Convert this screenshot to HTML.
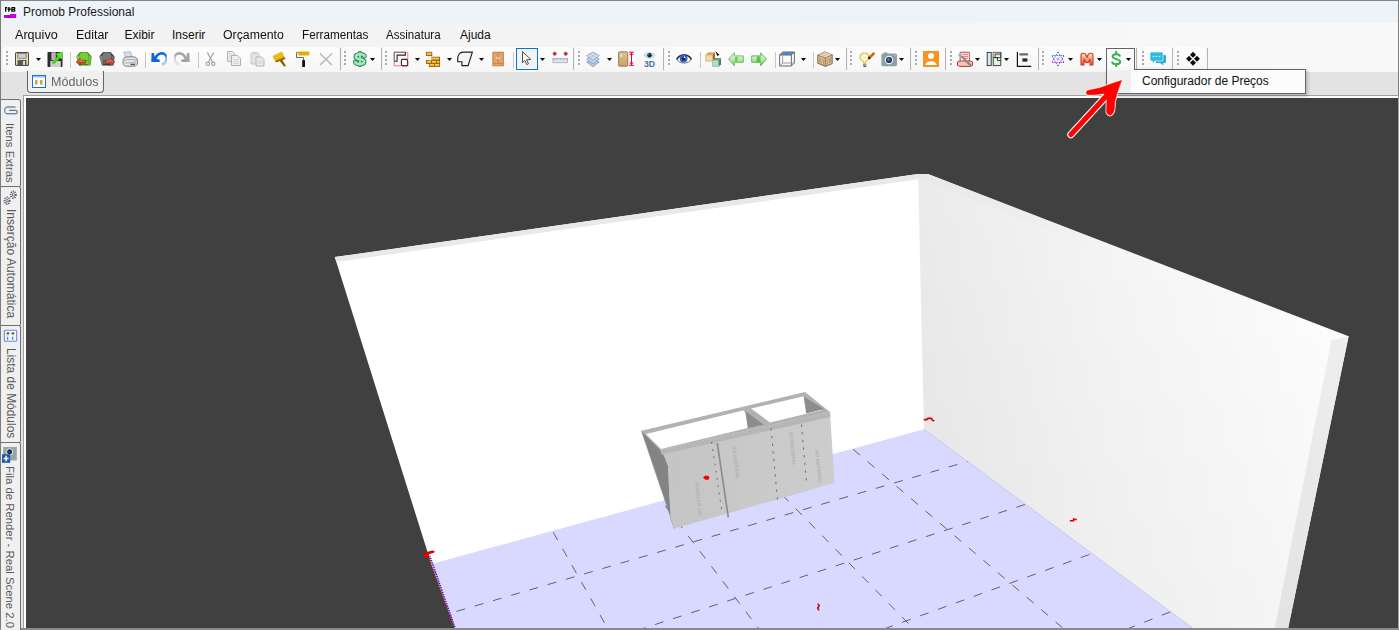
<!DOCTYPE html>
<html><head><meta charset="utf-8">
<style>
*{margin:0;padding:0;box-sizing:border-box}
html,body{width:1399px;height:630px;overflow:hidden;background:#f0f0f0;font-family:"Liberation Sans",sans-serif;font-size:12px;color:#000}
.a{position:absolute}
#title{left:0;top:0;width:1399px;height:23px;background:#eef2f9;border-top:1px solid #858585}
#menubar{left:0;top:23px;width:1399px;height:24px;background:linear-gradient(to right,#f1f1f1,#f9f9f9)}
#menubar span{position:absolute;top:5px;font-size:12px;color:#101010;transform-origin:0 0}
#tbrow{left:0;top:47px;width:1399px;height:25px;background:linear-gradient(to right,#f1f1f1,#f9f9f9)}
#tabrow{left:0;top:72px;width:1399px;height:25px;background:#e3e3e3}
.seg{position:absolute;top:47px;height:25px;background:linear-gradient(#fdfdfd,#f6f6f6);border-radius:4px 4px 0 0}
.grip{position:absolute;top:51px;width:2px;height:14px;background:repeating-linear-gradient(#a8a8a8 0 2px,transparent 2px 4px)}
.sep{position:absolute;top:52px;width:1px;height:16px;background:#c8c8c8}
.dd{position:absolute;top:58px;width:0;height:0;border-left:3px solid transparent;border-right:3px solid transparent;border-top:3px solid #000}
.ic{position:absolute;top:51px;width:16px;height:16px}
#lborder{left:0;top:0;width:1px;height:630px;background:#7d7d7d}
#rborder{left:1398px;top:0;width:1px;height:630px;background:#7d7d7d}
#bborder{left:0;top:628px;width:1399px;height:2px;background:#8a8a8a}
#vp{left:23px;top:95px;width:1376px;height:535px;border:1px solid #a0a0a0;background:#fff}
#dark{left:26px;top:98px;width:1372px;height:530px;background:#404040;overflow:hidden}
.vtab{position:absolute;left:1px;width:20px;background:#f0f0f0;border:1px solid #707070;border-left:none;border-radius:0 2.5px 2.5px 0}
.vt{position:absolute;left:3.8px;writing-mode:vertical-rl;font-size:11.6px;color:#5a5a5a;white-space:nowrap}
</style></head><body>
<div id="title" class="a">
  <svg class="a" style="left:0px;top:0px" width="20" height="20" viewBox="0 0 20 20"><rect x="4" y="4.5" width="12.2" height="12.5" fill="#fff"/>
<path d="M5,6 L7.3,6 L7.3,7.2 L6.3,7.2 L6.3,10.8 L5,10.8 Z" fill="#000"/>
<path d="M8.2,6 L9.6,6 L9.6,7.6 L10.8,7.6 L10.8,8.8 L9.6,8.8 L9.6,10.8 L8.2,10.8 L8.2,8.8 L7.4,8.8 L7.4,7.6 L8.2,7.6 Z" fill="#000"/>
<path d="M11.2,6 L14.6,6 Q15.4,6 15.4,7 L15.4,7.8 L14.8,8.4 L15.4,9 L15.4,10 Q15.4,10.8 14.6,10.8 L11.2,10.8 Z M12.5,7.2 L12.5,7.9 L13.9,7.9 L13.9,7.2 Z M12.5,9 L12.5,9.7 L13.9,9.7 L13.9,9 Z" fill="#000" fill-rule="evenodd"/>
<rect x="4" y="14" width="12.2" height="3" fill="#c000e0"/><rect x="10" y="13" width="6.2" height="1.2" fill="#c000e0"/><rect x="7.8" y="15.4" width="1.6" height="1" fill="#40106a"/></svg>
  <span class="a" style="left:23px;top:4px;font-size:12px;color:#1a1a1a">Promob Professional</span>
</div>
<div id="menubar" class="a">
  <span style="left:15px;transform:scaleX(1.05)">Arquivo</span>
  <span style="left:75.5px;transform:scaleX(1.035)">Editar</span>
  <span style="left:124.5px">Exibir</span>
  <span style="left:172px">Inserir</span>
  <span style="left:222.5px;transform:scaleX(1.025)">Orçamento</span>
  <span style="left:302px;transform:scaleX(0.977)">Ferramentas</span>
  <span style="left:386px;transform:scaleX(0.963)">Assinatura</span>
  <span style="left:460px">Ajuda</span>
</div>
<div id="tbrow" class="a"></div>
<div id="tabrow" class="a"></div>
<!--TB-->
<div class="seg" style="left:3px;width:336px"></div>
<div class="a" style="left:339.5px;top:48px;width:1px;height:22px;background:#b4b4b4"></div>
<div class="seg" style="left:341.5px;width:39.0px"></div>
<div class="a" style="left:381.0px;top:48px;width:1px;height:22px;background:#b4b4b4"></div>
<div class="seg" style="left:383px;width:189.5px"></div>
<div class="a" style="left:573.0px;top:48px;width:1px;height:22px;background:#b4b4b4"></div>
<div class="seg" style="left:575px;width:87.5px"></div>
<div class="a" style="left:663.0px;top:48px;width:1px;height:22px;background:#b4b4b4"></div>
<div class="seg" style="left:665px;width:180.5px"></div>
<div class="a" style="left:846.0px;top:48px;width:1px;height:22px;background:#b4b4b4"></div>
<div class="seg" style="left:848px;width:61.5px"></div>
<div class="a" style="left:910.0px;top:48px;width:1px;height:22px;background:#b4b4b4"></div>
<div class="seg" style="left:912px;width:32.5px"></div>
<div class="a" style="left:945.0px;top:48px;width:1px;height:22px;background:#b4b4b4"></div>
<div class="seg" style="left:947px;width:90.5px"></div>
<div class="a" style="left:1038.0px;top:48px;width:1px;height:22px;background:#b4b4b4"></div>
<div class="seg" style="left:1040px;width:95px"></div>
<div class="a" style="left:1135.5px;top:48px;width:1px;height:22px;background:#b4b4b4"></div>
<div class="seg" style="left:1137.5px;width:34.0px"></div>
<div class="a" style="left:1172.0px;top:48px;width:1px;height:22px;background:#b4b4b4"></div>
<div class="seg" style="left:1174px;width:32px"></div>
<div class="a" style="left:1206.5px;top:48px;width:1px;height:22px;background:#b4b4b4"></div>
<div class="grip" style="left:6px"></div>
<div class="grip" style="left:344px"></div>
<div class="grip" style="left:385px"></div>
<div class="grip" style="left:577.5px"></div>
<div class="grip" style="left:667.5px"></div>
<div class="grip" style="left:850px"></div>
<div class="grip" style="left:914.5px"></div>
<div class="grip" style="left:949.5px"></div>
<div class="grip" style="left:1042px"></div>
<div class="grip" style="left:1141.5px"></div>
<div class="grip" style="left:1176.5px"></div>
<div class="sep" style="left:70px"></div>
<div class="sep" style="left:145px"></div>
<div class="sep" style="left:197.5px"></div>
<div class="sep" style="left:513px"></div>
<div class="sep" style="left:699.5px"></div>
<div class="sep" style="left:774.5px"></div>
<div class="sep" style="left:812.5px"></div>
<div class="a" style="left:516px;top:48px;width:22px;height:22px;border:1px solid #0078d7;background:#f3f3f3"></div>
<div class="a" style="left:1106px;top:48px;width:29px;height:23px;border:1px solid #646464;border-bottom:none;background:#fbfbfb"></div>
<svg class="a" style="left:35.5px;top:58px" width="6" height="4" viewBox="0 0 6 4"><path d="M0,0 L5,0 L2.5,3 Z" fill="#000"/></svg>
<svg class="a" style="left:370px;top:58px" width="6" height="4" viewBox="0 0 6 4"><path d="M0,0 L5,0 L2.5,3 Z" fill="#000"/></svg>
<svg class="a" style="left:414.5px;top:58px" width="6" height="4" viewBox="0 0 6 4"><path d="M0,0 L5,0 L2.5,3 Z" fill="#000"/></svg>
<svg class="a" style="left:447px;top:58px" width="6" height="4" viewBox="0 0 6 4"><path d="M0,0 L5,0 L2.5,3 Z" fill="#000"/></svg>
<svg class="a" style="left:478.5px;top:58px" width="6" height="4" viewBox="0 0 6 4"><path d="M0,0 L5,0 L2.5,3 Z" fill="#000"/></svg>
<svg class="a" style="left:540px;top:58px" width="6" height="4" viewBox="0 0 6 4"><path d="M0,0 L5,0 L2.5,3 Z" fill="#000"/></svg>
<svg class="a" style="left:607px;top:58px" width="6" height="4" viewBox="0 0 6 4"><path d="M0,0 L5,0 L2.5,3 Z" fill="#000"/></svg>
<svg class="a" style="left:801px;top:58px" width="6" height="4" viewBox="0 0 6 4"><path d="M0,0 L5,0 L2.5,3 Z" fill="#000"/></svg>
<svg class="a" style="left:835px;top:58px" width="6" height="4" viewBox="0 0 6 4"><path d="M0,0 L5,0 L2.5,3 Z" fill="#000"/></svg>
<svg class="a" style="left:899px;top:58px" width="6" height="4" viewBox="0 0 6 4"><path d="M0,0 L5,0 L2.5,3 Z" fill="#000"/></svg>
<svg class="a" style="left:975px;top:58px" width="6" height="4" viewBox="0 0 6 4"><path d="M0,0 L5,0 L2.5,3 Z" fill="#000"/></svg>
<svg class="a" style="left:1004px;top:58px" width="6" height="4" viewBox="0 0 6 4"><path d="M0,0 L5,0 L2.5,3 Z" fill="#000"/></svg>
<svg class="a" style="left:1068px;top:58px" width="6" height="4" viewBox="0 0 6 4"><path d="M0,0 L5,0 L2.5,3 Z" fill="#000"/></svg>
<svg class="a" style="left:1097px;top:58px" width="6" height="4" viewBox="0 0 6 4"><path d="M0,0 L5,0 L2.5,3 Z" fill="#000"/></svg>
<svg class="a" style="left:1126px;top:58px" width="6" height="4" viewBox="0 0 6 4"><path d="M0,0 L5,0 L2.5,3 Z" fill="#000"/></svg>
<svg class="a" style="left:14px;top:51px" width="16" height="16" viewBox="0 0 16 16"><rect x="1" y="1" width="14" height="14" rx="1.5" fill="#4a4a4a"/>
<rect x="2" y="2" width="12" height="12" rx="0.8" fill="#e6e2b4"/>
<rect x="3.5" y="2" width="9" height="5.5" rx="0.5" fill="#5a5a5a"/>
<rect x="4.2" y="2.6" width="7.6" height="4.3" fill="#cfcfcf"/>
<rect x="3.5" y="9" width="9" height="5" fill="#58595a"/>
<rect x="9" y="10" width="2" height="4" fill="#e6e2b4"/></svg>
<svg class="a" style="left:47px;top:51px" width="16" height="16" viewBox="0 0 16 16"><rect x="0.5" y="1" width="15" height="15" rx="0.8" fill="#2a2a2a"/>
<rect x="4.3" y="1.3" width="4.5" height="8" fill="#b4b4b4"/>
<rect x="3.3" y="10" width="10.5" height="6" fill="#cfcfcf"/>
<path d="M5.8,12.5 L12.8,5.2" stroke="#4bd41e" stroke-width="3.2"/>
<path d="M8.5,3 L15.8,0.6 L14.8,8.2 Z" fill="#5ee02a"/></svg>
<svg class="a" style="left:76px;top:51px" width="16" height="16" viewBox="0 0 16 16"><path d="M4,1 L11.5,1 L15.6,5.5 L14.5,14.5 L3,14.5 L0.4,5.5 Z" fill="#3f8a14"/>
<path d="M4.5,1.4 L11,1.4 L12.5,4.5 L12.2,9.5 L3.8,9.5 L3.3,4.5 Z" fill="#76cc32"/>
<path d="M0.9,5.5 L3.4,4.5 L4,14 L2.8,14 Z" fill="#80d640"/>
<path d="M15.1,5.5 L12.6,4.5 L12.1,14 L13.9,14 Z" fill="#72c236"/>
<rect x="4.2" y="10.2" width="7.8" height="2.8" fill="#7cd040"/>
<path d="M0,11 L4.4,7 L4.4,9.2 L9.6,9.2 L9.6,12.4 L4.4,12.4 L4.4,14.8 Z" fill="#c4442c" stroke="#8a2614" stroke-width="0.4"/>
<path d="M2,11 L4.5,8.8 L4.5,10.2 L8.8,10.2" stroke="#f4b0a0" stroke-width="0.6" fill="none"/></svg>
<svg class="a" style="left:99px;top:51px" width="16" height="16" viewBox="0 0 16 16"><path d="M4,1 L11.5,1 L15.6,5.5 L14.5,14.5 L3,14.5 L0.4,5.5 Z" fill="#3a3a3a"/>
<path d="M4.5,1.4 L11,1.4 L12.5,4.5 L12.2,9.5 L3.8,9.5 L3.3,4.5 Z" fill="#7a7a7a"/>
<path d="M0.9,5.5 L3.4,4.5 L4,14 L2.8,14 Z" fill="#8a8a8a"/>
<path d="M15.1,5.5 L12.6,4.5 L12.1,14 L13.9,14 Z" fill="#6a6a6a"/>
<rect x="4.2" y="10.2" width="7.8" height="2.8" fill="#6a6a6a"/>
<path d="M16,11 L11,7 L11,9.2 L6.2,9.2 L6.2,12.4 L11,12.4 L11,14.8 Z" fill="#c4442c" stroke="#8a2614" stroke-width="0.4"/>
<path d="M7,10.2 L11.2,10.2 L11.2,8.8 L14,11" stroke="#f4b0a0" stroke-width="0.6" fill="none"/></svg>
<svg class="a" style="left:122px;top:51px" width="16" height="16" viewBox="0 0 16 16"><path d="M1.8,1.2 L8.5,0.8 L10.2,6 L3.8,6.6 Z" fill="#cfe2f8" stroke="#8a9ab0" stroke-width="0.6"/>
<path d="M1,9.5 C1,7 3,5.8 6,5.8 L11,5.8 C14,5.8 15.5,7.5 15.5,9.5 L15.5,12 C15.5,14 14,15.3 11,15.3 L5,15.3 C2.5,15.3 1,14 1,12 Z" fill="#e4e4e4" stroke="#6a6a6a" stroke-width="0.8"/>
<path d="M2,9.5 C4,8.2 11,8 15,9.2 M2.5,12 L14.5,11.8" stroke="#8a8a8a" stroke-width="0.6" fill="none"/>
<rect x="8.5" y="12.8" width="4.5" height="1.3" fill="#50507a"/><circle cx="12.8" cy="10.2" r="0.5" fill="#50a050"/></svg>
<svg class="a" style="left:151px;top:51px" width="16" height="16" viewBox="0 0 16 16"><defs><linearGradient id="ug" gradientUnits="userSpaceOnUse" x1="0" y1="2" x2="12" y2="14"><stop offset="0.6" stop-color="#0a64d8"/><stop offset="1" stop-color="#0a64d8" stop-opacity="0.25"/></linearGradient></defs>
<path d="M3.8,8.2 C5.5,4 8.5,2.2 11,2.2 C14,2.4 15.6,5 15.6,7.6 C15.6,10.6 13.6,12.8 11,13.8" stroke="url(#ug)" stroke-width="2.6" fill="none"/>
<path d="M0.6,2 L2.9,2 L4,7.6 L8.7,8.8 L8.7,11 L0.3,11 Z" fill="#0a64d8"/></svg>
<svg class="a" style="left:174px;top:51px" width="16" height="16" viewBox="0 0 16 16"><defs><linearGradient id="rg" gradientUnits="userSpaceOnUse" x1="16" y1="2" x2="4" y2="14"><stop offset="0.6" stop-color="#a4a4a4"/><stop offset="1" stop-color="#a4a4a4" stop-opacity="0.2"/></linearGradient></defs>
<path d="M12.2,8.2 C10.5,4 7.5,2.2 5,2.2 C2,2.4 0.4,5 0.4,7.6 C0.4,10.6 2.4,12.8 5,13.8" stroke="url(#rg)" stroke-width="2.6" fill="none"/>
<path d="M15.4,2 L13.1,2 L12,7.6 L7.3,8.8 L7.3,11 L15.7,11 Z" fill="#a4a4a4"/></svg>
<svg class="a" style="left:203px;top:51px" width="16" height="16" viewBox="0 0 16 16"><path d="M4.3,1.5 L9.5,11 M10.7,1.5 L5.5,11" stroke="#a0a0a0" stroke-width="1.2"/>
<circle cx="4.8" cy="12.8" r="1.7" fill="none" stroke="#a0a0a0" stroke-width="1.1"/>
<circle cx="10.2" cy="12.8" r="1.7" fill="none" stroke="#a0a0a0" stroke-width="1.1"/></svg>
<svg class="a" style="left:227px;top:51px" width="16" height="16" viewBox="0 0 16 16"><path d="M0.5,0.5 L5.5,0.5 L7.5,2.5 L7.5,10.5 L0.5,10.5 Z" fill="#ececec" stroke="#b4b4b4" stroke-width="1" stroke-linejoin="miter"/>
<path d="M1.8,3 L5.5,3 M1.8,5 L5.5,5 M1.8,7 L4,7" stroke="#cfcfcf" stroke-width="0.7"/>
<path d="M4.5,4.5 L10.5,4.5 L13.5,7.5 L13.5,14.5 L4.5,14.5 Z" fill="#efefef" stroke="#b0b0b0" stroke-width="1" stroke-linejoin="miter"/>
<path d="M6,8.5 L12,8.5 M6,10.5 L12,10.5 M6,12.5 L12,12.5" stroke="#c8c8c8" stroke-width="0.7"/></svg>
<svg class="a" style="left:249.5px;top:51px" width="16" height="16" viewBox="0 0 16 16"><path d="M1,3 C1,1 9,1 9,3 L9,13 L1,13 Z" fill="#e4e4e4" stroke="#c4c4c4" stroke-width="0.9"/>
<rect x="3" y="1" width="4" height="2" fill="#d0d0d0"/>
<path d="M6,6 L11.5,6 L14,8.5 L14,15 L6,15 Z" fill="#ececec" stroke="#b0b0b0" stroke-width="0.9"/>
<path d="M7.5,10 L12.5,10 M7.5,12 L12.5,12" stroke="#c4c4c4" stroke-width="0.7"/></svg>
<svg class="a" style="left:272px;top:51px" width="16" height="16" viewBox="0 0 16 16"><path d="M0.5,5 L10,0.5 L12.5,6 L3,10 Z" fill="#e8b400"/>
<path d="M3,10 L12.5,6 L13.5,8 L4,11.5 Z" fill="#9a6a00"/>
<path d="M7.5,9.5 L10,8.5 L14,15 L12,15.5 Z" fill="#8a5a00"/>
<path d="M2,5.5 L10,2 M3,7.5 L11,4" stroke="#f8d860" stroke-width="0.6"/></svg>
<svg class="a" style="left:296px;top:51px" width="16" height="16" viewBox="0 0 16 16"><rect x="2.3" y="0.4" width="11" height="4" rx="0.4" fill="#e8ac00"/>
<path d="M2.3,1.6 L0.5,1.6 L0.5,6.5 L7.5,6.5 L7.5,9" stroke="#5a5a5a" stroke-width="0.9" fill="none"/>
<rect x="6.2" y="9" width="2.8" height="7" rx="0.6" fill="#111"/></svg>
<svg class="a" style="left:318px;top:51px" width="16" height="16" viewBox="0 0 16 16"><path d="M2,2.5 L14,14 M14,2.5 L2,14" stroke="#b4b4b4" stroke-width="1.4"/></svg>
<svg class="a" style="left:351.5px;top:51px" width="16" height="16" viewBox="0 0 16 16"><g fill="none" stroke-linecap="round">
<path d="M8,1.5 L8,14.5" stroke="#2a8a50" stroke-width="3.6"/>
<path d="M12.6,5.2 C11.6,2.6 3.8,2.4 3.8,5.9 C3.8,9 12.2,7.6 12.2,10.6 C12.2,13.8 4.2,13.8 3.2,11" stroke="#2a8a50" stroke-width="4.6"/>
<path d="M8,1.8 L8,14.2" stroke="#b0ecd0" stroke-width="1.6"/>
<path d="M12.6,5.2 C11.6,2.6 3.8,2.4 3.8,5.9 C3.8,9 12.2,7.6 12.2,10.6 C12.2,13.8 4.2,13.8 3.2,11" stroke="#a8e6c6" stroke-width="2.6"/>
</g></svg>
<svg class="a" style="left:393px;top:51px" width="16" height="16" viewBox="0 0 16 16"><path d="M14.8,8 L14.8,1.2 L12.4,1.2 M1.2,10.3 L1.2,14.8 L8.4,14.8" fill="none" stroke="#f07a7a" stroke-width="1"/>
<path d="M12.4,1.2 L1.2,1.2 L1.2,10.3" fill="none" stroke="#7a3a3a" stroke-width="1"/>
<path d="M1.2,10.3 L4.1,10.3 L4.1,4.1 L12.4,4.1 L12.4,1.2" fill="none" stroke="#2a2a2a" stroke-width="1.1"/>
<rect x="8.4" y="8.4" width="6.2" height="6.2" rx="1" fill="#fff" stroke="#2a2a2a" stroke-width="1.1"/>
<path d="M14.6,10 L14.6,14.6 L9.5,14.6" fill="none" stroke="#6a3030" stroke-width="1.1"/></svg>
<svg class="a" style="left:425px;top:51px" width="16" height="16" viewBox="0 0 16 16"><defs><linearGradient id="bk" x1="0" y1="0" x2="0" y2="1"><stop offset="0" stop-color="#fff0b0"/><stop offset="0.45" stop-color="#ffc040"/><stop offset="1" stop-color="#e89800"/></linearGradient></defs>
<g fill="url(#bk)" stroke="#9a6200" stroke-width="0.9">
<rect x="1.4" y="1.3" width="5.4" height="3.3"/>
<rect x="6.5" y="6.2" width="8.1" height="3"/>
<rect x="1.4" y="9.4" width="5.1" height="3.1"/><rect x="6.5" y="9.4" width="5" height="3.1"/><rect x="11.5" y="9.4" width="3.1" height="3.1"/>
<rect x="4.4" y="12.6" width="5" height="3.1"/><rect x="9.4" y="12.6" width="5.2" height="3.1"/>
</g>
<rect x="3.5" y="6.2" width="3" height="3" fill="#fff" stroke="#c8a070" stroke-width="0.4" stroke-dasharray="0.6,0.4"/></svg>
<svg class="a" style="left:456.5px;top:51px" width="16" height="16" viewBox="0 0 16 16"><path d="M5.9,1.1 L15.4,1.1 L11.1,14.6 L4.9,14.6 L4.9,10.7 L0.7,10.7 L0.7,7.7 C0.7,4 3,1.1 5.9,1.1 Z" fill="#f4f4f4" stroke="#1e1e1e" stroke-width="1.15"/></svg>
<svg class="a" style="left:491.5px;top:51px" width="16" height="16" viewBox="0 0 16 16"><rect x="0.9" y="1.2" width="10.4" height="13.6" fill="#e6a46c" stroke="#b87838" stroke-width="0.9"/>
<path d="M6.1,1.5 L6.1,12.2 M1.2,12.4 L11,12.4" stroke="#b87838" stroke-width="0.7"/>
<rect x="4.6" y="6.2" width="1" height="1.8" fill="#e8f0f4"/><rect x="6.6" y="6.2" width="1" height="1.8" fill="#e8f0f4"/></svg>
<svg class="a" style="left:520px;top:51px" width="16" height="16" viewBox="0 0 16 16"><path d="M2.5,0.7 L2.5,11.6 L4.8,9.4 L6.8,13.6 L8.5,12.8 L6.6,8.7 L10.9,8.5 Z" fill="#f8f8f8" stroke="#4a4a4a" stroke-width="0.95" stroke-linejoin="round"/></svg>
<svg class="a" style="left:551.5px;top:51px" width="16" height="16" viewBox="0 0 16 16"><rect x="0.9" y="7.3" width="14.5" height="4.4" fill="#e4e4ee" stroke="#a8a8bc" stroke-width="0.8"/>
<path d="M1.8,8.6 L14.6,8.6" stroke="#555" stroke-width="0.8" stroke-dasharray="0.8,2.2"/>
<circle cx="2.7" cy="2.7" r="1.7" fill="#e02020" stroke="#6a6a6a" stroke-width="0.5"/><circle cx="13.7" cy="2.7" r="1.7" fill="#e02020" stroke="#6a6a6a" stroke-width="0.5"/></svg>
<svg class="a" style="left:585px;top:51px" width="16" height="16" viewBox="0 0 16 16"><g stroke="#7890b8" stroke-width="0.7">
<path d="M8,7.5 L14.3,11 L8,15.8 L1.6,11 Z" fill="#b4c6e0"/>
<path d="M8,4.5 L14.3,8 L8,12.8 L1.6,8 Z" fill="#c4d4ea"/>
<path d="M8,1 L14.3,4.6 L8,9.4 L1.6,4.6 Z" fill="#d4e0f0"/></g>
<path d="M4.8,3 L11.2,6.8 M11.2,3 L4.8,6.8" stroke="#9ab0d0" stroke-width="0.5"/></svg>
<svg class="a" style="left:618px;top:51px" width="16" height="16" viewBox="0 0 16 16"><defs><linearGradient id="dg" x1="0" y1="0" x2="0" y2="1"><stop offset="0" stop-color="#dcc090"/><stop offset="1" stop-color="#c8a26c"/></linearGradient></defs>
<rect x="0.6" y="0.8" width="9.2" height="14.4" rx="1.2" fill="url(#dg)" stroke="#8a6a3a" stroke-width="0.8"/>
<rect x="2.6" y="3" width="1.2" height="5" fill="#f4f4f4"/><rect x="2.6" y="6" width="1.2" height="2" fill="#a0a0a0"/>
<path d="M11,1.2 L16,1.2 M13.5,1.5 L13.5,14.5 M11,14.3 L16,14.3" stroke="#e0004a" stroke-width="1"/>
<path d="M11.3,4 L13.5,1.7 L15.7,4 Z M11.3,11.5 L13.5,13.8 L15.7,11.5 Z" fill="#e0004a"/></svg>
<svg class="a" style="left:642px;top:51px" width="16" height="16" viewBox="0 0 16 16"><ellipse cx="7.5" cy="4.3" rx="5.8" ry="3.4" fill="#c0e0f4"/>
<circle cx="7.5" cy="4.3" r="2.2" fill="#1a2430"/><circle cx="6.8" cy="3.6" r="0.6" fill="#90a8c0"/>
<text x="7.5" y="15.8" text-anchor="middle" font-family="Liberation Sans" font-weight="bold" font-size="8.6" fill="#3a74a8">3D</text></svg>
<svg class="a" style="left:676px;top:51px" width="16" height="16" viewBox="0 0 16 16"><path d="M0.8,8.3 C3.5,2.5 12.5,2.5 15.4,8.3 C12.5,13.3 3.5,13.3 0.8,8.3 Z" fill="#fff" stroke="#6a6a6a" stroke-width="0.9"/>
<path d="M0.8,8.3 C3.5,2.5 12.5,2.5 15.4,8.3" fill="none" stroke="#1a2a50" stroke-width="1.6"/>
<circle cx="7.6" cy="7.6" r="3.9" fill="#2e60c0"/><circle cx="7.6" cy="7.8" r="1.5" fill="#0a1838"/><circle cx="8.6" cy="6.4" r="0.8" fill="#fff"/></svg>
<svg class="a" style="left:704.5px;top:51px" width="16" height="16" viewBox="0 0 16 16"><path d="M0.6,4 L3,1.2 L10,1.2 L7.8,4 Z" fill="#d8a860"/>
<path d="M0.6,4 L7.8,4 L7.8,10.2 L0.6,10.2 Z" fill="#f4d8a8" stroke="#c89858" stroke-width="0.5"/>
<path d="M7.8,4 L10,1.2 L10,7.2 L7.8,10.2 Z" fill="#9a6a28"/>
<path d="M7.6,9.2 L9.8,7 L16,7 L13.8,9.2 Z" fill="#6a9a7a"/>
<path d="M7.6,9.2 L13.8,9.2 L13.8,15.6 L7.6,15.6 Z" fill="#b4dcc4" stroke="#78a88a" stroke-width="0.5"/>
<path d="M13.8,9.2 L16,7 L16,13.2 L13.8,15.6 Z" fill="#4a7a5a"/>
<path d="M11,1.2 L14.5,3.8 L12.2,5 Z" fill="#111"/><path d="M10.5,0.8 L13,3.2" stroke="#111" stroke-width="1"/></svg>
<svg class="a" style="left:727.5px;top:52px" width="16" height="16" viewBox="0 0 16 16"><defs><linearGradient id="ga" x1="0" y1="0" x2="0" y2="1"><stop offset="0" stop-color="#f0fbe8"/><stop offset="0.55" stop-color="#b4e8a8"/><stop offset="1" stop-color="#78cc68"/></linearGradient></defs>
<path d="M0.6,7 L6.3,0.8 L6.3,3.9 L15.3,3.9 L15.3,10.3 L6.3,10.3 L6.3,13.8 Z" fill="url(#ga)" stroke="#5ab048" stroke-width="0.8" stroke-linejoin="round"/>
<path d="M7,5 L10,5 L9,9.5 L7,9.5 Z" fill="#4cb83a" opacity="0.7"/></svg>
<svg class="a" style="left:750.5px;top:52px" width="16" height="16" viewBox="0 0 16 16"><path d="M15.4,7 L9.7,0.8 L9.7,3.9 L0.7,3.9 L0.7,10.3 L9.7,10.3 L9.7,13.8 Z" fill="url(#ga)" stroke="#48a838" stroke-width="0.8" stroke-linejoin="round"/>
<path d="M6,4.5 L9.5,4.5 L9.5,10 L5,10 Z" fill="#3cb02a" opacity="0.7"/></svg>
<svg class="a" style="left:779px;top:51px" width="16" height="16" viewBox="0 0 16 16"><path d="M3.6,1 L15.4,1 L12.4,4 L0.6,4 Z" fill="#3a8ee8"/>
<g fill="none" stroke="#6a6a6a" stroke-width="1" stroke-linejoin="miter">
<path d="M0.6,4 L3.6,1 L15.4,1 L15.4,12 L12.4,15 L0.6,15 Z"/>
<path d="M0.6,4 L12.4,4 L12.4,15 M12.4,4 L15.4,1"/>
<path d="M3.6,1 L3.6,12 L15.4,12 M3.6,12 L0.6,15" stroke="#8a8a8a" stroke-width="0.8"/></g></svg>
<svg class="a" style="left:816.5px;top:51px" width="16" height="16" viewBox="0 0 16 16"><path d="M0.8,4.2 L7.6,0.9 L15.2,3.8 L15.2,12.6 L8.4,15.4 L0.8,12.2 Z" fill="#dcc09a" stroke="#7a5a32" stroke-width="0.9" stroke-linejoin="round"/>
<path d="M0.8,4.2 L7.6,0.9 L15.2,3.8 L8.2,7 Z" fill="#ecd8b8"/>
<path d="M0.8,4.2 L8.2,7 L15.2,3.8 M8.2,7 L8.4,15.4" stroke="#7a5a32" stroke-width="0.7" fill="none"/>
<path d="M2.5,6.5 L2.8,11.5 M4.2,7.5 L3.8,9.5 L4.5,12.6 M6.2,8.2 L6.5,13.8 M10.2,7.8 L10,13.5 M12,7 L12.3,12.2 M13.6,6 L13.4,11.5" stroke="#9a7a50" stroke-width="0.6" fill="none"/>
<path d="M3.5,3.8 L8,2.5 M6,5 L11,3.2" stroke="#b8987a" stroke-width="0.5"/></svg>
<svg class="a" style="left:859px;top:51px" width="16" height="16" viewBox="0 0 16 16"><path d="M5,14 L5,11.5 C5,10 1,9 1,6.5 C1,3.8 3,2.2 5.5,2.2 C8,2.2 10,3.8 10,6.5 C10,9 6.5,10 6.5,11.5 L6.5,14 Z" fill="#fffbe0" stroke="#e6c440" stroke-width="1.3"/>
<rect x="4" y="12.8" width="3.4" height="2.6" fill="#8a98a8"/><rect x="4.6" y="15" width="2.2" height="1" fill="#3a5080"/>
<path d="M4,6.8 L7,6.8" stroke="#d8c060" stroke-width="0.6"/>
<path d="M10.2,7 L15.4,1.8" stroke="#d86010" stroke-width="2.6"/><path d="M9.4,7.8 L10.8,6.4" stroke="#111" stroke-width="2.2"/></svg>
<svg class="a" style="left:881px;top:51px" width="16" height="16" viewBox="0 0 16 16"><rect x="0.4" y="2.6" width="15.6" height="12.6" rx="1.6" fill="#8fa0a4"/>
<rect x="2.5" y="1.6" width="4" height="1.6" rx="0.6" fill="#8fa0a4"/>
<circle cx="8" cy="9" r="4.2" fill="#f4f4f4"/><circle cx="8" cy="9" r="3.1" fill="#1e3a64"/><circle cx="8" cy="9" r="1.8" fill="#2c5a90"/><circle cx="7.2" cy="8.2" r="0.7" fill="#a8c0e0"/>
<path d="M13,4.6 L14.6,4.6" stroke="#c8d0d4" stroke-width="0.8"/></svg>
<svg class="a" style="left:923px;top:51px" width="16" height="16" viewBox="0 0 16 16"><rect x="0" y="0" width="16" height="16" fill="#f7941d"/>
<circle cx="8" cy="5" r="3" fill="#fff"/><path d="M2.5,14 C2.5,9 13.5,9 13.5,14 Z" fill="#fff"/></svg>
<svg class="a" style="left:957px;top:51px" width="16" height="16" viewBox="0 0 16 16"><path d="M3.2,1.3 L12.3,1.3 L12.3,11 L3.2,11 Z" fill="#fff" stroke="#c03030" stroke-width="0.9"/>
<path d="M5,3.3 L11,3.3 M6,5.3 L11,5.3 M7,7.3 L11,7.3" stroke="#d04040" stroke-width="0.8"/>
<path d="M0.5,11 L2.5,10 L13.5,10 L15.5,11 L15.5,14.3 L13,15.4 L2.5,15.4 L0.5,14.3 Z" fill="#f4c4b4" stroke="#b02020" stroke-width="0.9"/>
<path d="M3,4 L13.8,14.5" stroke="#8a8a8a" stroke-width="2.2" stroke-linecap="round"/>
<path d="M1.8,3 L4.2,5.2" stroke="#b0b0b0" stroke-width="2.6"/></svg>
<svg class="a" style="left:986px;top:51px" width="16" height="16" viewBox="0 0 16 16"><rect x="1.2" y="1.4" width="4" height="13.2" fill="#d4ecfc" stroke="#2a2a2a" stroke-width="0.9"/>
<path d="M7.2,1.4 L14.8,1.4 L14.8,14.6 L7.2,14.6 Z" fill="#ddf6dc" stroke="#2a2a2a" stroke-width="0.9"/>
<path d="M7.6,1.8 L14.4,1.8 L14.4,6.6 L7.6,6.6 Z" fill="#fff"/>
<path d="M9.3,3 L14.2,3 L14.2,5 L9.3,5 Z" fill="#f8d4e4"/>
<path d="M7.2,6.6 L11.5,6.6 L11.5,9.6 L14.8,9.6 M14.8,1.4 L14.8,6.6 L9,6.6 L9,3 L14.4,3" fill="none" stroke="#2a2a2a" stroke-width="0.9"/></svg>
<svg class="a" style="left:1016px;top:51px" width="16" height="16" viewBox="0 0 16 16"><path d="M1.4,1 L1.4,15.4 L15.2,15.4" stroke="#111" stroke-width="1.2" fill="none"/>
<path d="M3.4,2.2 L11.4,2.2 L12.6,3.3 L11.4,4.6 L3.4,4.6 Z" fill="#6a6a6a"/>
<rect x="6.4" y="7.4" width="5" height="3.2" fill="#1e1e1e"/><path d="M7.5,9 L10.5,9" stroke="#aaa" stroke-width="0.6" stroke-dasharray="0.6,0.8"/>
<path d="M14.5,4.5 L14.5,9.5" stroke="#bbb" stroke-width="0.6" stroke-dasharray="1,1"/></svg>
<svg class="a" style="left:1050px;top:51px" width="16" height="16" viewBox="0 0 16 16"><defs><linearGradient id="mg" x1="0" y1="0" x2="0" y2="1"><stop offset="0" stop-color="#2a6af0"/><stop offset="1" stop-color="#c020e0"/></linearGradient></defs>
<g fill="none" stroke="url(#mg)" stroke-width="1" stroke-dasharray="1.2,0.9">
<path d="M8,0.8 L14.2,11.5 L1.8,11.5 Z"/><path d="M8,15.2 L14.2,4.5 L1.8,4.5 Z"/></g>
<rect x="6.6" y="6.6" width="2.8" height="2.8" fill="#a0b8f8"/></svg>
<svg class="a" style="left:1079px;top:51px" width="16" height="16" viewBox="0 0 16 16"><defs><linearGradient id="mm" x1="0" y1="0" x2="0" y2="1"><stop offset="0" stop-color="#ffe4c8"/><stop offset="0.5" stop-color="#f8a070"/><stop offset="1" stop-color="#e85030"/></linearGradient></defs>
<path d="M2,14 L2,4 Q2,2.2 3.8,2.2 L5,2.2 Q6.2,2.2 6.8,3.5 L8,6.5 L9.2,3.5 Q9.8,2.2 11,2.2 L12.2,2.2 Q14,2.2 14,4 L14,14 L11,14 L11,8 L9.3,11.5 L6.7,11.5 L5,8 L5,14 Z" fill="url(#mm)" stroke="#c83a28" stroke-width="1.1" stroke-linejoin="round"/></svg>
<svg class="a" style="left:1108px;top:51px" width="16" height="16" viewBox="0 0 16 16"><g fill="none" stroke="#38b04e" stroke-width="2" stroke-linecap="round">
<path d="M11.8,4.8 C11,2.6 4.6,2.4 4.6,5.6 C4.6,8.8 12.2,7.4 12.2,10.8 C12.2,14 5.2,14 4.2,11.4"/>
<path d="M8.2,0.8 L8.2,2.6 M8.2,13.4 L8.2,15.2"/></g></svg>
<svg class="a" style="left:1150px;top:51px" width="16" height="16" viewBox="0 0 16 16"><path d="M5,4 L15,4 Q16,4 16,5 L16,11 Q16,12 15,12 L13,12 L13.5,14.5 L10,12 L6,12 Z" fill="#2ab0d8"/>
<path d="M1,1 L12,1 Q13,1 13,2 L13,9 Q13,10 12,10 L5,10 L2,13 L2.5,10 L1,10 Q0,10 0,9 L0,2 Q0,1 1,1 Z" fill="#2bbce0" stroke="#fff" stroke-width="0.6"/>
<circle cx="3.5" cy="5.5" r="0.8" fill="#fff"/><circle cx="6.5" cy="5.5" r="0.8" fill="#fff"/><circle cx="9.5" cy="5.5" r="0.8" fill="#fff"/></svg>
<svg class="a" style="left:1185px;top:51px" width="16" height="16" viewBox="0 0 16 16"><g transform="translate(8,7.8) rotate(45)" fill="#0a0a0a"><rect x="-4.9" y="-4.9" width="4.2" height="4.2"/><rect x="0.7" y="-4.9" width="4.2" height="4.2"/><rect x="-4.9" y="0.7" width="4.2" height="4.2"/><rect x="0.7" y="0.7" width="4.2" height="4.2"/></g></svg>
<!--/TB-->



















<div id="lborder" class="a"></div>
<div id="rborder" class="a"></div>
<div class="a" style="left:1px;top:97px;width:22px;height:533px;background:#e3e3e3"></div>
<div id="vp" class="a"></div>
<div id="dark" class="a"></div>
<svg class="a" style="left:26px;top:98px" width="1372" height="530" viewBox="26 98 1372 530">
<defs>
<linearGradient id="rw" gradientUnits="userSpaceOnUse" x1="925" y1="0" x2="1330" y2="0"><stop offset="0" stop-color="#ebebeb"/><stop offset="0.45" stop-color="#f5f5f5"/><stop offset="1" stop-color="#fefefe"/></linearGradient>
<linearGradient id="rwd" gradientUnits="userSpaceOnUse" x1="0" y1="190" x2="0" y2="629"><stop offset="0" stop-color="#000" stop-opacity="0"/><stop offset="1" stop-color="#000" stop-opacity="0.03"/></linearGradient>
<linearGradient id="rc" gradientUnits="userSpaceOnUse" x1="920" y1="0" x2="1100" y2="0"><stop offset="0" stop-color="#e9e9e9"/><stop offset="1" stop-color="#e9e9e9" stop-opacity="0"/></linearGradient>
<linearGradient id="re" gradientUnits="userSpaceOnUse" x1="0" y1="340" x2="0" y2="629"><stop offset="0" stop-color="#eeeeee"/><stop offset="1" stop-color="#e3e3e3"/></linearGradient>
<linearGradient id="cf" gradientUnits="userSpaceOnUse" x1="660" y1="450" x2="830" y2="470"><stop offset="0" stop-color="#c4c4c4"/><stop offset="1" stop-color="#cdcdcd"/></linearGradient>
<clipPath id="fl"><polygon points="431.3,564 924,429.3 1194,629 455.1,629"/></clipPath>
</defs>
<!-- left wall face -->
<polygon points="334.8,257.1 918,174 922,174 926,430 1194,629 455.1,629 431.3,564" fill="#ffffff"/>
<!-- left wall cap -->
<polygon points="334.8,257.1 918,174 920,179 336.4,262" fill="#e9e9e9"/>
<!-- right wall face -->
<polygon points="918,174 928,174 1348.6,336.2 1288,629 1150,629 924,445 924,430" fill="url(#rw)"/>
<polygon points="918,174 928,174 1348.6,336.2 1288,629 1150,629 924,445 924,430" fill="url(#rwd)"/>
<polygon points="918,174 928,174 1348.6,336.2 1331.4,340.5 920,179" fill="url(#rc)"/>
<!-- right wall end -->
<polygon points="1331.4,340.5 1348.6,336.2 1288,629 1274.6,629" fill="url(#re)"/>
<!-- floor -->
<polygon points="431.3,564 924,429.3 1194,629 455.1,629" fill="#d9d9ff"/>
<line x1="924" y1="429.3" x2="1194" y2="629" stroke="#c4c4ea" stroke-width="0.8"/>
<g clip-path="url(#fl)" stroke="#585870" stroke-width="0.95" stroke-dasharray="9,10" fill="none">
<line x1="420" y1="622.1" x2="1250" y2="378.6"/>
<line x1="420" y1="700.8" x2="1250" y2="431.5"/>
<line x1="420" y1="797.3" x2="1250" y2="496.2"/>
<line x1="420" y1="909.3" x2="1250" y2="580.3"/>
<line x1="478.4" y1="400" x2="614.2" y2="640"/>
<line x1="584.8" y1="400" x2="767.4" y2="640"/>
<line x1="689.2" y1="400" x2="924.6" y2="640"/>
<line x1="795.4" y1="400" x2="1076.9" y2="640"/>
</g>
<!-- left floor edge blue -->
<line x1="429.8" y1="555.7" x2="455.6" y2="629" stroke="#0000ff" stroke-width="1.3" stroke-dasharray="1.2,1.2"/>
<line x1="429.1" y1="556.5" x2="454.9" y2="629" stroke="#ff0000" stroke-width="1.1" stroke-dasharray="1.2,1.2" stroke-dashoffset="1.2"/>
<!-- cabinet -->
<g>
<polygon points="641.4,430.8 660.5,449.9 664.3,456.2 668,466 670.6,518.5 674.5,528.6" fill="#848484" stroke="#848484" stroke-width="0.5"/>
<polygon points="660.5,449.9 830,412 834.5,483 674.5,528.6 670.6,518.5 668,466 664.3,456.2" fill="url(#cf)"/>
<polygon points="660.5,449.9 830,412 830.3,417 661.3,454.6" fill="#b6b6b6"/>
<polygon points="641.4,430.8 805,392 830,412 660.5,449.9" fill="#b2b2b2"/>
<polygon points="646,434 743,410.5 762,424.5 661,449" fill="#ffffff"/>
<polygon points="751,408.5 803,396.5 822,410 770,422.5" fill="#ffffff"/>
<polygon points="745.2,411 763.7,424.4 747.8,428.2" fill="#8c8c8c"/>
<polygon points="803.7,396.4 824,409.1 806.2,413.6" fill="#8c8c8c"/>
<line x1="717.3" y1="443" x2="728.3" y2="517.3" stroke="#8a8a8a" stroke-width="1.6"/>
<line x1="711.6" y1="442" x2="722" y2="512" stroke="#686868" stroke-width="1" stroke-dasharray="1.8,5.5"/>
<line x1="771" y1="428.3" x2="777.4" y2="499.4" stroke="#686868" stroke-width="1" stroke-dasharray="2.2,5.5"/>
<line x1="801.5" y1="424.5" x2="806.6" y2="484.2" stroke="#686868" stroke-width="1" stroke-dasharray="2.2,5.5"/>
<g font-family="Liberation Sans" font-size="5" font-weight="bold" fill="#b2b2b2">
<text transform="translate(702,515) rotate(-97)">NO MATERIAL</text>
<text transform="translate(732,446) rotate(83)">NO MATERIAL</text>
<text transform="translate(789,432) rotate(84)">NO MATERIAL</text>
<text transform="translate(815,450) rotate(84)">NO MATERIAL</text>
</g>
</g>
<!-- red markers -->
<g fill="#e00000">
<path d="M703,477.5 L705,475.8 L708,475.8 L709.5,477.5 L708.5,479.8 L705.5,479.8 Z" fill="#f00000"/>
<path d="M423,554.5 L427.5,551.8 L432.5,550.6 L434.8,551.2 L434,552.8 L429.5,554 L428.5,555.5 L429.8,557.8 L426.5,558 L424.5,556 Z"/>
<path d="M923.8,419.6 L926.8,419.6 L927.8,418.4 L931.5,418.4 L932.2,420 L934.2,421" stroke="#d00000" stroke-width="1.6" fill="none"/>
<path d="M1069.8,520.8 L1073.6,520.8 L1073.6,519 L1076.8,519.8" stroke="#e00000" stroke-width="1.6" fill="none"/>
<path d="M817.8,603.6 L819.2,605.8 L817.6,608 L819,610.4" stroke="#c00010" stroke-width="1.5" fill="none"/>
</g>
</svg>

<div id="bborder" class="a"></div>
<!--EXTRA-->
<div class="a" style="left:27px;top:71px;width:77px;height:22px;border:1px solid #646464;border-top:none;border-radius:0 0 4px 4px;background:#f0f0f0"></div>
<svg class="a" style="left:32px;top:75px" width="14" height="13" viewBox="0 0 14 13"><rect x="0.5" y="0.5" width="13" height="12" fill="#fff" stroke="#1a6fd6" stroke-width="1"/><rect x="1" y="1" width="12" height="1.5" fill="#9cc4ec"/><rect x="3" y="5" width="2.5" height="4.5" fill="#c8a060"/><rect x="8" y="5" width="2.5" height="4.5" fill="#c8a060"/></svg>
<span class="a" style="left:51px;top:75px;font-size:12px;color:#646464;transform:scaleX(1.045);transform-origin:0 0">Módulos</span>
<div class="vtab" style="top:99px;height:88px"></div>
<div class="vtab" style="top:186px;height:140px"></div>
<div class="vtab" style="top:325px;height:118px"></div>
<div class="vtab" style="top:442px;height:200px"></div>
<svg class="a" style="left:2.5px;top:106px" width="15" height="9" viewBox="0 0 15 9"><path d="M12.5,1 L4,1 C1,1 1,7.8 4,7.8 L13,7.8 C14.8,7.8 14.8,4.3 13,4.3 L6,4.3" fill="none" stroke="#3a5a80" stroke-width="1"/></svg>
<span class="vt" style="top:123px;font-size:11.3px">Itens Extras</span>
<svg class="a" style="left:0px;top:186px" width="22" height="22" viewBox="0 0 22 22"><g fill="none" stroke="#6a6478">
<ellipse cx="13.3" cy="8.7" rx="2.6" ry="3.4" stroke-width="1.8" stroke-dasharray="1.3,0.9"/><ellipse cx="13.3" cy="8.7" rx="1" ry="1.6" stroke-width="0.9"/>
<ellipse cx="7.1" cy="14.7" rx="2.6" ry="3.4" stroke-width="1.8" stroke-dasharray="1.3,0.9"/><ellipse cx="7.1" cy="14.7" rx="1" ry="1.6" stroke-width="0.9"/></g></svg>
<span class="vt" style="top:208.5px;font-size:12.05px">Inserção Automática</span>
<svg class="a" style="left:0px;top:326px" width="22" height="22" viewBox="0 0 22 22"><rect x="4.3" y="4.3" width="12.4" height="11" rx="1" fill="#eef6fc" stroke="#6a8ed0" stroke-width="1.1"/>
<path d="M6.2,7.4 Q8,5.2 9.6,7 L8.8,8.6 L7,8.6 Z M11.2,7.4 Q13,5.2 14.6,7 L13.8,8.6 L12,8.6 Z" fill="#6a5420"/><rect x="6.8" y="8.6" width="2" height="0.8" fill="#d8c8a0"/><rect x="11.8" y="8.6" width="2" height="0.8" fill="#d8c8a0"/>
<rect x="7" y="10.8" width="1.2" height="3" fill="#5a7ac8"/><rect x="12" y="10.8" width="1.2" height="3" fill="#5a7ac8"/></svg>
<span class="vt" style="top:347.5px;font-size:11.95px">Lista de Módulos</span>
<svg class="a" style="left:0px;top:442px" width="22" height="24" viewBox="0 0 22 24"><path d="M3.2,5 L16.8,5 L16.8,18.5 L3.2,18.5 Z" fill="#96a6a6"/><rect x="15" y="4.6" width="1.8" height="1.6" fill="#b4c0c0"/>
<circle cx="9.6" cy="9.8" r="3.4" fill="#e8eeee"/><circle cx="9.6" cy="9.8" r="2.5" fill="#1a2a44"/><circle cx="9.2" cy="10.2" r="0.6" fill="#2a8ae8"/>
<rect x="2" y="12.2" width="8.2" height="8.6" fill="#1e5aa8"/><path d="M6.1,13.8 L6.1,19.2 M3.6,16.5 L8.6,16.5" stroke="#fff" stroke-width="1.5"/></svg>
<span class="vt" style="top:465.5px;font-size:11.35px">Fila de Render - Real Scene 2.0</span>
<!-- dropdown menu -->
<div class="a" style="left:1107px;top:70px;width:201px;height:27px;background:rgba(0,0,0,0.18);filter:blur(1.5px)"></div>
<div class="a" style="left:1106px;top:69px;width:200px;height:25px;background:#fcfcfc;border:1px solid #646464;border-top:none"></div>
<div class="a" style="left:1134px;top:69px;width:172px;height:1px;background:#646464"></div>
<div class="a" style="left:1107px;top:70px;width:24px;height:23px;background:#efefef"></div>
<span class="a" style="left:1142px;top:74px;font-size:12px;color:#101010">Configurador de Preços</span>
<!-- red arrow -->
<svg class="a" style="left:1055px;top:70px" width="80" height="80" viewBox="1055 70 80 80">
<g fill="#fff" stroke="#fff" stroke-width="2.2" stroke-linejoin="round" stroke-linecap="round">
<path d="M1071,134.5 L1110,92" stroke-width="7.4" fill="none"/>
<path d="M1121.3,80.6 L1111.7,83.7 L1099.8,88.1 L1087.9,90.5 Q1084.5,92.5 1087.9,94.8 L1095.9,94.4 L1104,93.5 L1107,96 L1106.6,112.3 Q1110.2,119 1114.1,110.7 L1114.9,101.2 L1117.3,92.5 Z"/>
</g>
<g fill="#ff0000" stroke="#ff0000" stroke-width="0.6" stroke-linejoin="round" stroke-linecap="round">
<path d="M1071,134.5 L1110,92" stroke-width="5.2" fill="none"/>
<path d="M1121.3,80.6 L1111.7,83.7 L1099.8,88.1 L1087.9,90.5 Q1084.5,92.5 1087.9,94.8 L1095.9,94.4 L1104,93.5 L1107,96 L1106.6,112.3 Q1110.2,119 1114.1,110.7 L1114.9,101.2 L1117.3,92.5 Z"/>
</g>
</svg>
<!--/EXTRA-->
</body></html>
